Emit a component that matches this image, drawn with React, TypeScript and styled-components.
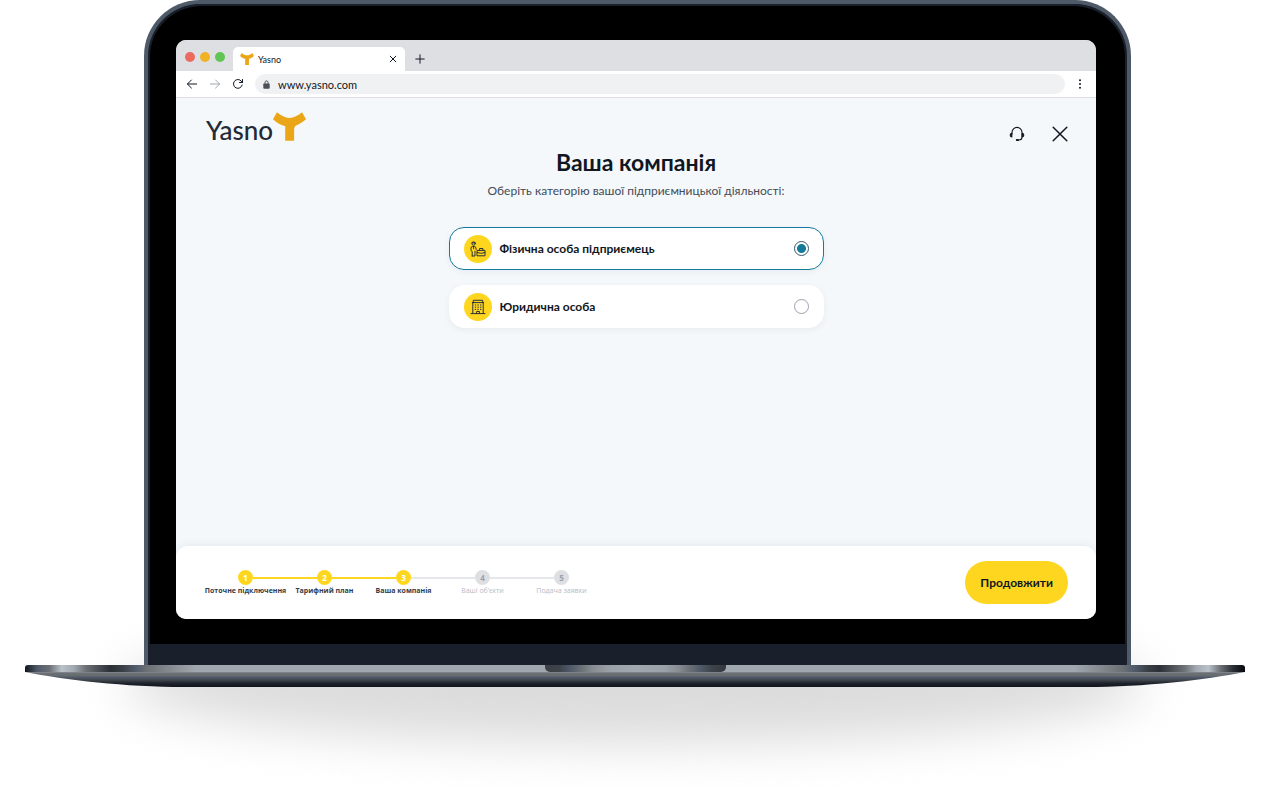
import React, { useState } from "react";
import styled, { createGlobalStyle } from "styled-components";

const colors = {
  ink: "#111722",
  text: "#434a56",
  yellow: "#ffd61f",
  amber: "#eba617",
  teal: "#147a9c",
  muted: "#dedfe3",
  page: "#f4f8fb",
  slate: "#4f5a69",
  chin: "#1a202b",
};

const GlobalStyle = createGlobalStyle`
  * { box-sizing: border-box; }
  body {
    margin: 0;
    background: #fff;
    color: ${colors.ink};
    font-family: Lato, "Open Sans", sans-serif;
  }
  button, input { font: inherit; color: inherit; }
`;

const Stage = styled.div`
  padding: 0 26px 0 25px;
`;

const Laptop = styled.div`
  position: relative;
  isolation: isolate;
  padding-bottom: 101px;
`;

const Shadow = styled.div`
  position: absolute;
  z-index: -1;
  left: 8%;
  right: 8%;
  bottom: 44px;
  height: 118px;
  border-radius: 50%;
  background: #dcdcdc;
  filter: blur(24px);
`;

const Lid = styled.div`
  margin: 0 114px 0 119px;
  border: 4px solid ${colors.slate};
  border-bottom: 0;
  border-radius: 56px 56px 0 0;
  background: ${colors.chin};
`;

const Bezel = styled.div`
  margin: 0 2px;
  border-top: 2px solid ${colors.chin};
  border-radius: 52px 52px 0 0;
  padding: 34px 29px 25px 26px;
  background: #000;
`;

const Chin = styled.div`
  height: 21px;
`;

const Screen = styled.div`
  display: flex;
  flex-direction: column;
  border-radius: 10px;
  overflow: hidden;
  background: ${colors.page};
`;

const TabBar = styled.div`
  display: flex;
  align-items: flex-end;
  height: 31px;
  padding-left: 9px;
  background: ${colors.muted};
`;

const Lights = styled.div`
  display: flex;
  gap: 5px;
  padding-bottom: 9px;
  margin-right: 8px;
`;

const Light = styled.span<{ $color: string }>`
  width: 10px;
  height: 10px;
  border-radius: 50%;
  background: ${(p) => p.$color};
`;

const Tab = styled.div`
  display: flex;
  align-items: center;
  gap: 4px;
  width: 172px;
  height: 24px;
  padding: 0 8px 0 7px;
  border-radius: 5px 5px 0 0;
  background: #fff;
  font-size: 9px;
`;

const TabTitle = styled.span`
  flex: 1;
`;

const IconButton = styled.button`
  display: flex;
  align-items: center;
  justify-content: center;
  padding: 0;
  border: 0;
  background: none;
  cursor: pointer;
  svg { display: block; }
`;

const NewTab = styled(IconButton)`
  margin: 0 0 7px 10px;
`;

const Toolbar = styled.div`
  display: flex;
  align-items: center;
  height: 27px;
  padding: 0 12px 0 10px;
  gap: 11px;
  border-bottom: 1px solid ${colors.muted};
  background: #fff;
`;

const AddressBar = styled.label`
  display: flex;
  flex: 1;
  align-items: center;
  gap: 8px;
  height: 20px;
  padding: 0 8px;
  border-radius: 10px;
  background: #f0f1f3;
`;

const AddressInput = styled.input`
  flex: 1;
  min-width: 0;
  padding: 0;
  border: 0;
  outline: 0;
  background: none;
  font-size: 11px;
`;

const Header = styled.header`
  display: flex;
  align-items: flex-end;
  justify-content: space-between;
  height: 44px;
  padding: 0 28px 0 30px;
`;

const Brand = styled.a`
  display: flex;
  align-items: flex-end;
  color: #232a36;
  font-size: 26px;
  font-weight: 500;
  line-height: 24px;
  text-decoration: none;
  svg { margin-bottom: 1px; }
`;

const Actions = styled.div`
  display: flex;
  align-items: center;
  gap: 27px;
`;

const Main = styled.main`
  display: flex;
  flex-direction: column;
  align-items: center;
  min-height: 404px;
  padding: 7px 16px 0;
`;

const Title = styled.h1`
  margin: 0;
  font-size: 23px;
  font-weight: 700;
  line-height: 26px;
`;

const Choices = styled.fieldset`
  display: flex;
  flex-direction: column;
  gap: 15px;
  width: 100%;
  max-width: 375px;
  margin: 0;
  padding: 0;
  border: 0;
`;

const Hint = styled.legend`
  width: 100%;
  padding: 8px 0 28px;
  color: ${colors.text};
  font-size: 12px;
  line-height: 16px;
  text-align: center;
  white-space: nowrap;
`;

const Choice = styled.label<{ $active: boolean }>`
  display: flex;
  align-items: center;
  gap: 8px;
  height: 43px;
  padding: 0 14px;
  border: 1px solid ${(p) => (p.$active ? colors.teal : "#fff")};
  border-radius: 15px;
  background: #fff;
  box-shadow: 0 2px 6px rgba(30, 50, 70, 0.06);
  font-size: 12px;
  font-weight: 700;
  cursor: pointer;
`;

const ChoiceIcon = styled.span`
  display: flex;
  align-items: center;
  justify-content: center;
  width: 28px;
  height: 28px;
  border-radius: 50%;
  background: ${colors.yellow};
`;

const ChoiceText = styled.span`
  flex: 1;
`;

const Radio = styled.input`
  appearance: none;
  width: 15px;
  height: 15px;
  margin: 0;
  border: 1px solid #9aa1ab;
  border-radius: 50%;
  background: #fff;
  &:checked {
    border: 1px solid #35566b;
    background: radial-gradient(circle, ${colors.teal} 0 4px, #fff 5px);
  }
`;

const Footer = styled.footer`
  display: flex;
  align-items: center;
  justify-content: space-between;
  height: 73px;
  padding: 0 28px 0 30px;
  border-radius: 12px 12px 0 0;
  background: #fff;
  box-shadow: 0 -2px 8px rgba(30, 50, 70, 0.06);
`;

const Steps = styled.ol`
  display: flex;
  margin: 0;
  padding: 0;
  list-style: none;
`;

const Step = styled.li<{ $done: boolean }>`
  display: flex;
  flex-direction: column;
  align-items: center;
  gap: 2px;
  width: 79px;
  color: ${(p) => (p.$done ? "#343c49" : "#b6bbc3")};
  font-family: "Open Sans", sans-serif;
  font-size: 7px;
  font-weight: ${(p) => (p.$done ? 700 : 400)};
  line-height: 8px;
  white-space: nowrap;
`;

const Track = styled.span`
  display: flex;
  align-items: center;
  width: 100%;
`;

const Line = styled.span<{ $tone: "done" | "todo" | "none" }>`
  flex: 1;
  height: 2px;
  background: ${(p) =>
    p.$tone === "done" ? colors.yellow : p.$tone === "todo" ? "#e6e7ea" : "transparent"};
`;

const Dot = styled.span<{ $done: boolean }>`
  width: 15px;
  height: 15px;
  border-radius: 50%;
  background: ${(p) => (p.$done ? colors.yellow : colors.muted)};
  color: ${(p) => (p.$done ? "#fff" : "#9aa1ab")};
  font-size: 8px;
  font-weight: 700;
  line-height: 15px;
  text-align: center;
`;

const Continue = styled.button`
  height: 43px;
  padding: 0 15px;
  border: 0;
  border-radius: 22px;
  background: ${colors.yellow};
  font-size: 12px;
  font-weight: 700;
  cursor: pointer;
`;

const Deck = styled.div`
  display: flex;
  justify-content: center;
  height: 7px;
  border-radius: 3px 3px 0 0;
  background: linear-gradient(
    90deg,
    #10141c 0, #4f5a69 1%, #6b7075 2%, #b9c1c9 3%, #a3a9b0 4%, #6b7075 5%,
    #2b2f36 7%, #3a3f45 8%, #4f5a69 9%, #6b7075 10%, #878c92 12%, #a1a7ae 14%,
    #a1a7ae 86%, #878c92 88%, #6b7075 90%, #4f5a69 91%, #3a3f45 92%, #2b2f36 93%,
    #6b7075 95%, #a3a9b0 96%, #b9c1c9 97%, #6b7075 98%, #2b2f36 99%, #05070c 100%
  );
`;

const Notch = styled.div`
  width: 181px;
  height: 7px;
  border-radius: 0 0 5px 5px;
  background: linear-gradient(
    90deg,
    #3a3f45 0, #3f444b 8%, #4f5a69 14%, #6b7075 20%, #878c92 26%, #9ba1a8 36%,
    #a1a7ae 50%, #9ba1a8 66%, #878c92 74%, #6b7075 80%, #4f5a69 86%, #3f444b 92%, #33373d 100%
  );
`;

const Underside = styled.svg`
  display: block;
  width: 100%;
  height: 15px;
`;

const YMark = ({ width, height }: { width: number; height: number }) => (
  <svg width={width} height={height} viewBox="0 0 100 86" aria-hidden="true">
    <path
      fill={colors.amber}
      d="M12 0C24 10 37 17 50 17S76 10 88 0L100 21C88 31 78 36 70 40C65 43 64 48 64 56V86H37V42C22 38 10 31 0 21Z"
    />
  </svg>
);

const Glyph = ({
  width, height, box, stroke = 1, color = colors.ink, children,
}: {
  width: number; height: number; box: string; stroke?: number; color?: string; children: React.ReactNode;
}) => (
  <svg
    width={width} height={height} viewBox={box} fill="none" stroke={color}
    strokeWidth={stroke} strokeLinecap="round" strokeLinejoin="round" aria-hidden="true"
  >
    {children}
  </svg>
);

const EntrepreneurIcon = () => (
  <Glyph width={16} height={16} box="0 0 16 16" stroke={1} color="#2b3038">
    <circle cx="3.6" cy="2.5" r="1.7" />
    <path d="M2 1.9H5.2" />
    <path d="M2.2 15V10.5L1 9.5V7.2Q1 5.5 2.6 5.5H4.4Q5.5 5.5 5.8 6.8L6.2 8.4M2.2 15H5V10.2M3.6 5.7V7.8" />
    <path d="M7.4 9.4H15V14.8H7.4ZM9.5 9.2V7.5H12.9V9.2M7.4 11.5L10.4 12.2H12L15 11.5" />
  </Glyph>
);

const BuildingIcon = () => (
  <Glyph width={16} height={16} box="0 0 16 16" stroke={1} color="#2b3038">
    <path d="M1 14.6H15M2.8 14.4V3.6M13.2 14.4V3.6M2.3 3.6H13.7M3.3 3.4V1.3H12.7V3.4" />
    <path d="M5.2 6H5.8M7.8 6H8.4M10.4 6H11M5.2 8.2H5.8M7.8 8.2H8.4M10.4 8.2H11M5.2 10.4H5.8M7.8 10.4H8.4M10.4 10.4H11" />
    <path d="M6.7 14.4V12.5H9.5V14.4" />
  </Glyph>
);

const choices = [
  { id: "fop", label: "Фізична особа підприємець", Icon: EntrepreneurIcon },
  { id: "legal", label: "Юридична особа", Icon: BuildingIcon },
];

const steps = ["Поточне підключення", "Тарифний план", "Ваша компанія", "Ваші об’єкти", "Подача заявки"];
const currentStep = 2;

const tone = (index: number) => (index <= currentStep ? "done" : "todo");

export default function App() {
  const [selected, setSelected] = useState("fop");

  return (
    <Stage>
      <GlobalStyle />
      <Laptop>
        <Shadow />
        <Lid>
          <Bezel>
            <Screen>
              <TabBar>
                <Lights>
                  <Light $color="#ed6a5e" />
                  <Light $color="#f0b323" />
                  <Light $color="#61c554" />
                </Lights>
                <Tab>
                  <YMark width={14} height={12} />
                  <TabTitle>Yasno</TabTitle>
                  <IconButton aria-label="Close tab">
                    <Glyph width={8} height={8} box="0 0 8 8"><path d="M1.2 1.2L6.8 6.8M6.8 1.2L1.2 6.8" /></Glyph>
                  </IconButton>
                </Tab>
                <NewTab aria-label="New tab">
                  <Glyph width={10} height={10} box="0 0 10 10"><path d="M5 .8V9.2M.8 5H9.2" /></Glyph>
                </NewTab>
              </TabBar>
              <Toolbar>
                <IconButton aria-label="Back">
                  <Glyph width={12} height={10} box="0 0 12 10"><path d="M10.6 5H1.4M5.4 1L1.4 5L5.4 9" /></Glyph>
                </IconButton>
                <IconButton aria-label="Forward">
                  <Glyph width={12} height={10} box="0 0 12 10" color="#a1a7ae"><path d="M1.4 5H10.6M6.6 1L10.6 5L6.6 9" /></Glyph>
                </IconButton>
                <IconButton aria-label="Reload">
                  <Glyph width={12} height={12} box="0 0 12 12"><path d="M10.2 7A4.4 4.4 0 1 1 9.3 3.1L10.4 4.4M10.5 1.5V4.5H7.5" /></Glyph>
                </IconButton>
                <AddressBar>
                  <svg width="7" height="9" viewBox="0 0 7 9" aria-hidden="true">
                    <path d="M2 4V2.4a1.5 1.5 0 0 1 3 0V4" fill="none" stroke="#4b515b" />
                    <rect x=".3" y="3.5" width="6.4" height="5.2" rx=".8" fill="#4b515b" />
                  </svg>
                  <AddressInput aria-label="Address" defaultValue="www.yasno.com" />
                </AddressBar>
                <IconButton aria-label="Menu">
                  <svg width="8" height="10" viewBox="0 0 8 10" fill={colors.ink}>
                    <circle cx="4" cy="1.3" r="1" /><circle cx="4" cy="5" r="1" /><circle cx="4" cy="8.7" r="1" />
                  </svg>
                </IconButton>
              </Toolbar>
              <Header>
                <Brand href="#" aria-label="Yasno">
                  Yasno
                  <YMark width={33} height={29} />
                </Brand>
                <Actions>
                  <IconButton aria-label="Support">
                    <Glyph width={16} height={16} box="0 0 16 16" stroke={1.1}>
                      <path d="M3 8V6.4A5 5 0 0 1 13 6.4V11Q13 14 10 14H8.2" />
                      <path d="M2.8 7.2V11Q1.2 10.8 1.2 9.1T2.8 7.2ZM13.2 7.2V11Q14.8 10.8 14.8 9.1T13.2 7.2Z" fill={colors.ink} />
                      <path d="M7.8 14H9" stroke={colors.ink} strokeWidth="2" />
                    </Glyph>
                  </IconButton>
                  <IconButton aria-label="Close">
                    <Glyph width={16} height={16} box="0 0 16 16" stroke={1.5}><path d="M1.2 1.2L14.8 14.8M14.8 1.2L1.2 14.8" /></Glyph>
                  </IconButton>
                </Actions>
              </Header>
              <Main>
                <Title>Ваша компанія</Title>
                <Choices>
                  <Hint>Оберіть категорію вашої підприємницької діяльності:</Hint>
                  {choices.map(({ id, label, Icon }) => (
                    <Choice key={id} $active={selected === id}>
                      <ChoiceIcon><Icon /></ChoiceIcon>
                      <ChoiceText>{label}</ChoiceText>
                      <Radio
                        type="radio"
                        name="category"
                        value={id}
                        checked={selected === id}
                        onChange={() => setSelected(id)}
                      />
                    </Choice>
                  ))}
                </Choices>
              </Main>
              <Footer>
                <Steps>
                  {steps.map((label, i) => (
                    <Step key={label} $done={i <= currentStep}>
                      <Track>
                        <Line $tone={i === 0 ? "none" : tone(i)} />
                        <Dot $done={i <= currentStep}>{i + 1}</Dot>
                        <Line $tone={i === steps.length - 1 ? "none" : tone(i + 1)} />
                      </Track>
                      {label}
                    </Step>
                  ))}
                </Steps>
                <Continue>Продовжити</Continue>
              </Footer>
            </Screen>
          </Bezel>
          <Chin />
        </Lid>
        <Deck><Notch /></Deck>
        <Underside viewBox="0 0 1220 15" preserveAspectRatio="none" aria-hidden="true">
          <defs>
            <linearGradient id="underside" x1="0" y1="0" x2="0" y2="1">
              <stop offset="0" stopColor="#878c92" />
              <stop offset=".1" stopColor="#6b7075" />
              <stop offset=".25" stopColor="#666b70" />
              <stop offset=".35" stopColor="#4f5a69" />
              <stop offset=".55" stopColor="#3f444b" />
              <stop offset=".75" stopColor="#1d222c" />
              <stop offset="1" stopColor="#10141c" />
            </linearGradient>
          </defs>
          <path fill="url(#underside)" d="M0 0H1220C1180 8 1120 15 1060 15H160C100 15 40 8 0 0Z" />
        </Underside>
      </Laptop>
    </Stage>
  );
}
